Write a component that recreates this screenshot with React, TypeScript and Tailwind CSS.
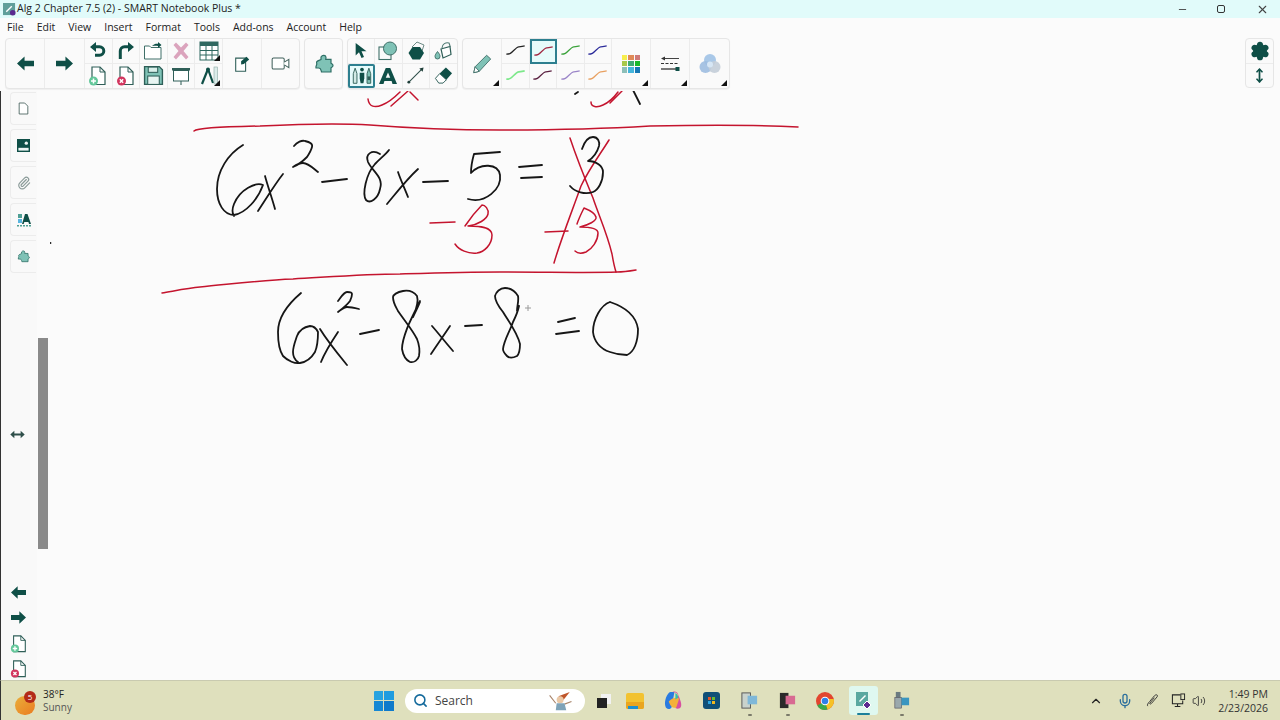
import React from "react";
import { Search, ChevronUp, Mic, X, Minus, Settings, MoveVertical, Paperclip, Volume2 } from "lucide-react";

const DARK = "#0f4f47";
const MID = "#7fc2b6";

type IconProps = { className?: string };

function ArrowLeft({ className }: IconProps) {
  return (
    <svg viewBox="0 0 20 18" className={className}>
      <path d="M1 9 9 1.5V6h10v6H9v4.5z" fill={DARK} />
    </svg>
  );
}

function ArrowRight({ className }: IconProps) {
  return (
    <svg viewBox="0 0 20 18" className={className}>
      <path d="M19 9 11 1.5V6H1v6h10v4.5z" fill={DARK} />
    </svg>
  );
}

function Undo() {
  return (
    <svg viewBox="0 0 20 20" className="w-[20px] h-[20px]">
      <path d="M2 6 8 1v3.2h3.5a5.7 5.7 0 0 1 0 11.6H7v-3h4.5a2.8 2.8 0 0 0 0-5.6H8V11z" fill={DARK} />
    </svg>
  );
}

function Redo() {
  return (
    <svg viewBox="0 0 20 20" className="w-[20px] h-[20px]">
      <path d="M18 6 12 1v3.2H8.500a5.700 5.700 0 0 0-5.700 5.800V18h3v-8a2.800 2.800 0 0 1 2.800-2.800H12V11z" fill={DARK} />
    </svg>
  );
}

function OpenFile() {
  return (
    <svg viewBox="0 0 20 20" className="w-[20px] h-[20px]">
      <path d="M1.500 18V5h5l1.500 1.500h10V18z" fill="#fff" stroke="#3f6f68" strokeWidth="1" />
      <path d="M9 5c2-2 4-2.500 6-2.200V1l3.500 3-3.500 3V5c-2-.3-4 0-6 0z" fill={DARK} />
    </svg>
  );
}

function Delete() {
  return (
    <svg viewBox="0 0 20 20" className="w-[20px] h-[20px]">
      <path d="M2.500 4 5 1.500l5 5 5-5L17.500 4l-5 6 5 6-2.500 2.500-5-5.500-5 5.500L2.500 16l5-6z" fill="#dba4bd" />
    </svg>
  );
}

function TableIcon() {
  return (
    <svg viewBox="0 0 20 20" className="w-[20px] h-[20px]">
      <rect x="1" y="1" width="18" height="18" fill="#fff" stroke="#2f6860" />
      <rect x="1" y="1" width="18" height="4" fill="#2f6860" />
      <path d="M1 9.500h18M1 14h18M7 5v14M13 5v14" stroke="#2f6860" strokeWidth="1" />
    </svg>
  );
}

function NewPage({ badge }: { badge: "add" | "del" }) {
  const color = badge === "add" ? "#63c79a" : "#d2365f";
  return (
    <svg viewBox="0 0 20 20" className="w-[20px] h-[20px]">
      <path d="M4 1h8l5 5v12.500H4z" fill="#fff" stroke="#2f5f58" strokeWidth="1.200" />
      <path d="M12 1v5h5" fill="none" stroke="#2f5f58" strokeWidth="1" />
      <circle cx="5.500" cy="15" r="4.500" fill={color} />
      {badge === "add" ? (
        <path d="M5.500 12.500v5M3 15h5" stroke="#fff" strokeWidth="1.500" />
      ) : (
        <path d="m3.800 13.300 3.400 3.400m0-3.400-3.400 3.400" stroke="#fff" strokeWidth="1.400" />
      )}
    </svg>
  );
}

function SaveIcon() {
  return (
    <svg viewBox="0 0 20 20" className="w-[21px] h-[21px]">
      <path d="M1.500 1.500h14l3 3v14h-17z" fill={MID} stroke="#2f5f58" strokeWidth="1.300" />
      <rect x="5" y="2" width="9" height="5" fill="#d9efea" stroke="#2f5f58" />
      <rect x="4.500" y="10.500" width="11" height="8" fill="#e8f5f2" stroke="#2f5f58" />
    </svg>
  );
}

function ScreenIcon() {
  return (
    <svg viewBox="0 0 20 20" className="w-[20px] h-[20px]">
      <rect x="1" y="2" width="18" height="2.500" fill="#2f5f58" />
      <rect x="2.500" y="4.500" width="15" height="10.500" fill="#fff" stroke="#2f5f58" />
      <path d="M10 15v2" stroke="#2f5f58" strokeWidth="1" />
      <circle cx="10" cy="18" r="1" fill="#6a8a85" />
    </svg>
  );
}

function Compass() {
  return (
    <svg viewBox="0 0 20 20" className="w-[20px] h-[20px]">
      <path d="M9 3 3 18M9 3l5 14" stroke={DARK} strokeWidth="2.200" fill="none" />
      <circle cx="9" cy="3.500" r="2" fill={DARK} />
      <rect x="15" y="1" width="3.500" height="17" fill="#dcecea" stroke="#8aa8a3" strokeWidth=".6" />
    </svg>
  );
}

function NoteIcon() {
  return (
    <svg viewBox="0 0 20 20" className="w-[18px] h-[18px]">
      <path d="M3 3.500h11V18H3z" fill="#fff" stroke="#2f5f58" strokeWidth="1.200" />
      <path d="m9 7 6-5 3 3-6 5-3 .5z" fill={DARK} />
    </svg>
  );
}

function CameraIcon() {
  return (
    <svg viewBox="0 0 20 14" className="w-[19px] h-[13px]">
      <rect x="1" y="1" width="13" height="12" rx="1.500" fill="#fff" stroke="#3f5f5a" strokeWidth="1.100" />
      <path d="m14 5.500 5-3v9l-5-3" fill="#fff" stroke="#3f5f5a" strokeWidth="1.100" />
    </svg>
  );
}

function Puzzle({ className }: IconProps) {
  return (
    <svg viewBox="0 0 20 20" className={className}>
      <path
        d="M7 3c1.500-2.500 5-2 5 .5 0 .8-.3 1.200-.3 1.800H17v3.800c.5.800 2 .7 2 2.400s-1.500 1.600-2 2.400V18H7.500c0-1.500-1-2.200-1-3s-1-1-2-1H2c-.5-2 .8-3 .8-4S2 8.500 3 7.500 6.500 6 7 5.500z"
        fill={MID}
        stroke="#2f6f66"
        strokeWidth="1.200"
      />
    </svg>
  );
}

function Cursor() {
  return (
    <svg viewBox="0 0 18 20" className="w-[15px] h-[17px]">
      <path d="M2 1v15l4-4 3 7 3-1.200-3-6.800h6z" fill={DARK} />
    </svg>
  );
}

function Shapes() {
  return (
    <svg viewBox="0 0 20 20" className="w-[20px] h-[20px]">
      <rect x="1" y="6" width="12" height="12.500" fill="none" stroke="#3f6f68" strokeWidth="1.100" />
      <circle cx="12" cy="7.500" r="6.500" fill={MID} stroke="#3f6f68" strokeWidth="1" />
    </svg>
  );
}

function Hexagon() {
  return (
    <svg viewBox="0 0 20 20" className="w-[20px] h-[20px]">
      <path d="m6 6 5-5 7 3-2 6" fill="none" stroke="#6d8b86" strokeWidth="1" />
      <path d="M6.500 6h7.500l4 6-4 6.500H6.500L2.500 12z" fill={DARK} />
    </svg>
  );
}

function Bucket() {
  return (
    <svg viewBox="0 0 20 20" className="w-[20px] h-[20px]">
      <path d="m8 8 9-2.500 1 8-8 3.500z" fill="#fff" stroke="#2f5f58" strokeWidth="1.200" />
      <path d="M9 7c0-4 4-6 7-5 1 2 1 3 1 4" fill="none" stroke="#4f7a73" strokeWidth="1.100" />
      <path d="M4.500 10.500c2 2.500 2.500 3.500 2.500 5a2.500 2.500 0 1 1-5 0c0-1.500 1-3 2.500-5z" fill={MID} stroke="#2f5f58" strokeWidth=".8" />
    </svg>
  );
}

function Pens() {
  return (
    <svg viewBox="0 0 24 20" className="w-[22px] h-[19px]">
      <path d="M2.500 8 4.500 2l2 6v10.500h-4z" fill="#d3ebe6" stroke="#2f5f58" />
      <circle cx="12" cy="3.500" r="2" fill={DARK} />
      <path d="M9.500 7h5v6l-1 5.500h-3l-1-5.500z" fill={DARK} />
      <path d="M17.500 8 19.500 2l2 6v10.500h-4z" fill={MID} stroke="#2f5f58" />
      <rect x="18" y="11" width="3" height="4" fill="#2f5f58" />
    </svg>
  );
}

function BigA() {
  return (
    <svg viewBox="0 0 20 20" className="w-[18px] h-[18px]">
      <path d="M7.500 1h5L20 19h-5l-1-3.500H6L5 19H0zm2.500 5L7.500 12h5z" fill={DARK} fillRule="evenodd" />
    </svg>
  );
}

function LineTool() {
  return (
    <svg viewBox="0 0 20 20" className="w-[19px] h-[19px]">
      <path d="M3 17 17 3" stroke="#2f4f4a" strokeWidth="1.100" />
      <circle cx="3" cy="17" r="1.500" fill="#1f3f3a" />
      <path d="m18.500 1.500-1 4.500-3.500-3.500z" fill="#1f3f3a" />
    </svg>
  );
}

function Eraser() {
  return (
    <svg viewBox="0 0 20 20" className="w-[19px] h-[19px]">
      <path d="M1.500 13 6 8l7 6.500L9.500 18H5z" fill="#fff" stroke="#2f5f58" />
      <path d="M6 8l6.500-6.500 6.500 6L13 14.500z" fill={DARK} />
    </svg>
  );
}

function Pencil() {
  return (
    <svg viewBox="0 0 24 24" className="w-[22px] h-[22px]">
      <path d="m17 2.500 4.500 4L9 20l-6 1.500L4.500 15z" fill={MID} stroke="#3f6f68" strokeWidth="1" />
      <path d="m4.500 15 4.500 5L3 21.500z" fill="#fff" stroke="#3f6f68" strokeWidth="1" />
    </svg>
  );
}

function Stroke({ color, width = 1.300 }: { color: string; width?: number }) {
  return (
    <svg viewBox="0 0 22 12" className="w-[21px] h-[11px]">
      <path d="M1 10c4 0 5-1 8-4s5-4 5.500-4c2 0 4-.5 6.500-1" fill="none" stroke={color} strokeWidth={width} />
    </svg>
  );
}

function Palette() {
  const colors = [
    "#f7ee4c", "#e08a57", "#cf7a78",
    "#a8c84a", "#3eaa72", "#18b82a",
    "#8dbfb8", "#45b5dc", "#1678b4",
  ];
  return (
    <div className="grid grid-cols-3 gap-px w-[18px] h-[18px]">
      {colors.map((c, i) => (
        <div key={i} style={{ backgroundColor: c }} />
      ))}
    </div>
  );
}

function LineStyle() {
  return (
    <svg viewBox="0 0 20 16" className="w-[20px] h-[16px]">
      <path d="M4 2.500h15" stroke="#444" strokeWidth="1" />
      <path d="M5 .5 1 2.500l4 2z" fill="#333" />
      <path d="M1 7.500h18" stroke="#333" strokeWidth="1" strokeDasharray="3 1.500" />
      <path d="M1 13h15" stroke="#333" strokeWidth="1.300" />
      <rect x="15.500" y="11" width="4" height="4" fill={DARK} />
    </svg>
  );
}

function FillBlobs() {
  return (
    <svg viewBox="0 0 22 22" className="w-[22px] h-[22px]">
      <circle cx="11" cy="7" r="6" fill="#a9c8e8" />
      <circle cx="6.500" cy="14" r="6" fill="#9dbde0" opacity=".9" />
      <circle cx="15.500" cy="14" r="6" fill="#c3cdd8" opacity=".9" />
      <circle cx="11" cy="11.500" r="3" fill="#d6e6f5" />
    </svg>
  );
}

function Cell({ className = "", children }: { className?: string; children?: React.ReactNode }) {
  return (
    <div className={"flex items-center justify-center border-[#ececec] " + className}>{children}</div>
  );
}

function Corner() {
  return (
    <span className="absolute right-[2px] bottom-[2px] w-0 h-0 border-l-[6px] border-t-[6px] border-l-transparent border-t-transparent border-r-[0px] border-b-0 [border-bottom:6px_solid_#111] [border-top:0] " />
  );
}

function Toolbar() {
  const frame = "flex h-[51px] rounded-[4px] border border-[#e6e6e6] bg-[#fafafa] shadow-[0_1px_1px_rgba(0,0,0,0.05)]";
  const tall = "w-[39px] border-r";
  const small = "border-r border-b";
  return (
    <div className="flex h-[53px] bg-[#fbfbfb] pl-[5px] items-start gap-[4px] relative z-10">
      <div className={frame + " w-[295px]"}>
        <Cell className={tall}><ArrowLeft className="w-[19px] h-[17px]" /></Cell>
        <Cell className={tall + " w-[40px]"}><ArrowRight className="w-[19px] h-[17px]" /></Cell>
        <div className="grid grid-cols-5 grid-rows-2 w-[138px]">
          <Cell className={small}><Undo /></Cell>
          <Cell className={small}><Redo /></Cell>
          <Cell className={small}><OpenFile /></Cell>
          <Cell className={small}><Delete /></Cell>
          <Cell className="relative border-b border-r"><TableIcon /><Corner /></Cell>
          <Cell className="border-r"><NewPage badge="add" /></Cell>
          <Cell className="border-r"><NewPage badge="del" /></Cell>
          <Cell className="border-r"><SaveIcon /></Cell>
          <Cell className="border-r"><ScreenIcon /></Cell>
          <Cell className="relative border-r"><Compass /><Corner /></Cell>
        </div>
        <Cell className={tall}><NoteIcon /></Cell>
        <Cell className="flex-1"><CameraIcon /></Cell>
      </div>
      <div className={frame + " w-[39px]"}>
        <Cell className="flex-1"><Puzzle className="w-[20px] h-[20px]" /></Cell>
      </div>
      <div className={frame + " w-[111px] grid grid-cols-4 grid-rows-2"}>
        <Cell className={small}><Cursor /></Cell>
        <Cell className={small}><Shapes /></Cell>
        <Cell className={small}><Hexagon /></Cell>
        <Cell className="border-b"><Bucket /></Cell>
        <Cell className="border-2 !border-[#2d7f8f] bg-[#e6fbfb] rounded-[2px]"><Pens /></Cell>
        <Cell className="border-r"><BigA /></Cell>
        <Cell className="border-r"><LineTool /></Cell>
        <Cell><Eraser /></Cell>
      </div>
      <div className={frame + " w-[268px]"}>
        <Cell className={"relative " + tall}><Pencil /><Corner /></Cell>
        <div className="grid grid-cols-4 grid-rows-2 w-[110px]">
          <Cell className={small}><Stroke color="#222" /></Cell>
          <Cell className="border-2 !border-[#2d7f8f] bg-[#e6fbfb]"><Stroke color="#a02640" /></Cell>
          <Cell className={small}><Stroke color="#3aa23a" /></Cell>
          <Cell className={small}><Stroke color="#2a2a9a" /></Cell>
          <Cell className="border-r"><Stroke color="#7ce88a" width={1.800} /></Cell>
          <Cell className="border-r"><Stroke color="#5a2040" /></Cell>
          <Cell className="border-r"><Stroke color="#9a84c8" /></Cell>
          <Cell className="border-r"><Stroke color="#e8a060" /></Cell>
        </div>
        <Cell className={"relative " + tall}><Palette /><Corner /></Cell>
        <Cell className={"relative " + tall}><LineStyle /><Corner /></Cell>
        <Cell className="relative flex-1"><FillBlobs /><Corner /></Cell>
      </div>
      <div className="ml-auto mr-[6px] w-[29px] h-[50px] rounded-[4px] border border-[#e6e6e6] bg-[#fafafa] flex flex-col">
        <Cell className="h-[25px] border-b"><Settings size={20} color={DARK} fill={DARK} strokeWidth={2.500} /></Cell>
        <Cell className="flex-1"><MoveVertical size={15} color={DARK} strokeWidth={2.800} /></Cell>
      </div>
    </div>
  );
}

function SideTab({ children }: { children: React.ReactNode }) {
  return (
    <div className="w-[26px] h-[33px] rounded-l-[4px] border border-r-0 border-[#ececec] bg-[#f9f9f9] flex items-center justify-center">
      {children}
    </div>
  );
}

function SideBar() {
  return (
    <div className="w-[50px] shrink-0 flex border-l border-[#333] bg-[#fdfdfd]">
      <div className="w-[36px] shrink-0 flex flex-col items-end bg-[#f9f9f9] pr-[1px] pt-[3px]">
        <div className="flex flex-col gap-[4px]">
          <SideTab>
            <svg viewBox="0 0 14 16" className="w-[11px] h-[13px]">
              <path d="M1.500 1h7l4 4v10h-11z" fill="#fff" stroke="#48625e" strokeWidth="1.100" />
            </svg>
          </SideTab>
          <SideTab>
            <svg viewBox="0 0 14 14" className="w-[13px] h-[13px]">
              <rect width="14" height="14" fill={DARK} />
              <rect x="1.500" y="9.500" width="11" height="3" fill="#eef5f3" />
              <circle cx="10" cy="4.500" r="1.800" fill="#eef5f3" />
            </svg>
          </SideTab>
          <SideTab><Paperclip size={14} color="#8a9a98" /></SideTab>
          <SideTab>
            <svg viewBox="0 0 14 14" className="w-[14px] h-[14px]">
              <rect x="1" y="1" width="4" height="4" fill="#4f9f94" />
              <rect x="1" y="6" width="4" height="4" fill="#58b5e0" />
              <path d="M8 1h2.500L14 11h-2l-.6-2H7.300l-.6 2H5z" fill={DARK} />
              <path d="M0 12.800h14" stroke="#4f9f94" strokeWidth="1.400" strokeDasharray="2 1" />
            </svg>
          </SideTab>
          <SideTab><Puzzle className="w-[13px] h-[13px]" /></SideTab>
        </div>
        <div className="flex-1 w-full relative">
          <div className="absolute left-[9px] top-[157px] text-[#3f5f5a]">
            <svg viewBox="0 0 16 10" className="w-[15px] h-[9px]">
              <path d="M0 5 4.500.8V4h7V.8L16 5l-4.500 4.200V6h-7v3.200z" fill="#2f4f4a" />
            </svg>
          </div>
          <div className="absolute left-[8px] bottom-[3px] flex flex-col items-center gap-[10px]">
            <ArrowLeft className="w-[19px] h-[15px]" />
            <ArrowRight className="w-[19px] h-[15px]" />
            <div className="flex flex-col gap-[7px] -mt-[1px]">
              <div className="w-[18px] h-[18px] flex"><NewPage badge="add" /></div>
              <div className="w-[18px] h-[18px] flex"><NewPage badge="del" /></div>
            </div>
          </div>
        </div>
      </div>
      <div className="flex-1 bg-[#fbfbfb] relative">
        <div className="absolute left-[1px] top-[249px] w-[10px] h-[211px] bg-[#8a8a8a]" />
      </div>
    </div>
  );
}

function Ink() {
  const black = { fill: "none", stroke: "#161616", strokeWidth: 1.800, strokeLinecap: "round", strokeLinejoin: "round" } as const;
  const red = { fill: "none", stroke: "#c4142e", strokeWidth: 1.500, strokeLinecap: "round", strokeLinejoin: "round" } as const;
  return (
    <svg viewBox="50 91 1230 589" className="absolute inset-0 w-full h-full">
      {/* cut off strokes from the step above */}
      <g {...red}>
        <path d="M368 100c1 8 7 9 14 6 8-3 14-9 18-13M391 107l17-15M410 93l8 8" />
        <path d="M591 103c0 5 6 6 12 3 7-3 12-9 15-13M610 104l12-12" />
      </g>
      <g {...black}>
        <path d="M575 95l3-2M633 91l7 14" />
      </g>
      <g {...red}>
        <path d="M194 132c3-3 21-4 66-5 40-2 80-3 110-1 50 4 100 5 130 5 60 0 100-1 150-4 50-1 110-1 148 1" />
        <path d="M162 294c12-2 26-5 38-6 32-3 62-7 93-8 36-2 72-5 107-5 34-1 66-2 100-2 50 0 90 1 117 0 7 0 13-1 19-2" />
        <path d="M430 224l25-1M545 233l23-1" />
        <path d="M465 227c4-6 12-16 17-21 3 0 7 4 6 9-1 5-10 11-20 12 12 0 24 1 24 9 0 10-8 17-15 18-9 1-18-3-22-9" />
        <path d="M570 139c6 18 13 36 23 60 6 18 14 35 19 56 1 6 2 12 4 18" />
        <path d="M609 141c-8 13-20 29-28 46-10 28-20 53-27 77" />
        <path d="M577 225c2-6 5-12 7-16 5 2 11 5 12 9 1 4-8 8-16 10 9 0 18 1 18 6 0 8-6 16-12 19-5 2-9 1-11-1" />
      </g>
      <g {...black}>
        <path d="M243 146c-15 9-26 26-26 44 0 15 7 26 17 26 12-2 24-16 29-30-7-3-23 4-29 19-2 5-2 9 0 12" />
        <path d="M258 212c8-12 17-27 25-37M265 177c3 11 7 22 10 33" />
        <path d="M294 147c3-4 8-6 11-5 5 1 8 3 7 6-1 4-3 7-5 10-4 4-9 8-14 10 3-2 7-4 10-4 5 0 10 5 15 9" />
        <path d="M322 183l25-3" />
        <path d="M380 155c-8-5-15 0-12 8 4 9 16 15 12 27-2 10-10 15-14 11-4-6 0-26 9-36 7-7 11-10 14-14" />
        <path d="M387 205c10-12 20-25 31-35M398 173c3 9 7 17 10 25" />
        <path d="M423 183l25-1" />
        <path d="M500 153l-26 2c-2 7-3 13-3 19 9-10 27-10 29 2 2 14-15 29-32 24" />
        <path d="M519 168l23-2M521 179l21-1" />
        <path d="M582 150c2-6 6-12 11-12 5 0 7 5 6 9-2 7-6 12-11 15 8 0 15 5 15 11 0 10-5 18-10 20-8 3-18 0-23-6" />
        <path d="M301 294c-13 11-23 24-23 39 0 10 1 18 5 24 5 5 12 8 17 7 7-1 12-6 15-11 3-7 3-16 3-20-2-4-5-6-8-6-6 1-11 5-13 10-2 6-4 11-4 16 0 4 2 8 5 10" />
        <path d="M320 330c8 13 18 25 27 36M338 333c-6 9-13 20-17 30" />
        <path d="M338 302c3-4 6-9 9-9 3 0 5 1 5 2 0 3-1 5-2 7-3 4-8 8-12 11 3-2 6-5 9-5 4 0 8 1 12 2" />
        <path d="M360 335l19-4" />
        <path d="M420 303c-2 5-5 11-7 15 3-7 6-15 4-21-3-4-8-6-14-5-6 1-10 4-10 6 0 6 3 10 5 14 6 9 14 18 19 28 2 5 3 11 2 17-1 4-5 7-9 6-4-2-7-7-8-13 0-8 3-15 6-23 4-9 8-17 12-25" />
        <path d="M431 355c6-9 13-19 19-28M432 327c7 8 14 17 21 25" />
        <path d="M465 327l17-1" />
        <path d="M517 312c0-5 2-10 1-15-3-5-8-8-13-8-5 0-9 4-10 8 0 6 4 11 8 16 6 10 14 20 17 32 0 5-1 10-3 12-4 2-8 2-10 0-3-3-4-5-4-7 1-9 7-18 10-27 3-6 5-11 6-16" />
        <path d="M558 323l17-4M556 335l23-3" />
        <path d="M610 303c-9 3-17 17-17 30 1 9 7 17 17 20 8 3 14 3 17 3 7-3 11-13 11-26-2-14-13-22-28-27" />
      </g>
      <path d="M528 306v6M525 309h6" stroke="#9a9a9a" strokeWidth="1" />
      <circle cx="50.500" cy="244" r="0.900" fill="#111" />
    </svg>
  );
}

function Tile({ children, active }: { children: React.ReactNode; active?: boolean }) {
  return (
    <div className={"relative w-[29px] h-[29px] flex items-center justify-center rounded-[3px] " + (active ? "bg-[#dff8f0]" : "")}>
      {children}
      {active && <span className="absolute bottom-0 left-[8px] w-[13px] h-[2px] rounded bg-[#1b7f9a]" />}
    </div>
  );
}

function AppDot() {
  return <span className="absolute -bottom-[1px] left-[13px] w-[4px] h-[2px] rounded bg-[#7a7a6a]" />;
}

function TaskBar() {
  return (
    <div className="h-[40px] shrink-0 flex items-center bg-[#dfe0bd] border-t border-[#c9cab0] border-l border-l-[#333] relative z-10 [font-family:'Open_Sans','Noto_Sans',sans-serif] text-[#333]">
      <div className="relative w-[22px] h-[22px] ml-[14px]">
        <div className="absolute left-0 top-[6px] w-[20px] h-[19px] rounded-full bg-gradient-to-br from-[#e9ae3a] to-[#ea7a20]" />
        <div className="absolute left-[9px] top-[1px] w-[12px] h-[12px] rounded-full bg-[#b32a18] text-white text-[8px] leading-[12px] text-center">5</div>
      </div>
      <div className="ml-[6px] flex flex-col leading-[13px] text-[10px] mt-[1px]">
        <span className="text-[#222]">38°F</span>
        <span className="text-[#555]">Sunny</span>
      </div>
      <div className="ml-[302px] grid grid-cols-2 gap-px w-[20px] h-[20px]">
        <div className="bg-[#27a3e0] rounded-tl-[1px]" />
        <div className="bg-[#1f9ce0]" />
        <div className="bg-[#1688d4]" />
        <div className="bg-[#0f7acb]" />
      </div>
      <div className="ml-[11px] w-[180px] h-[24px] rounded-full bg-white flex items-center pl-[8px] relative">
        <Search size={15} color="#146a9c" strokeWidth={2.500} />
        <span className="ml-[7px] text-[12px] text-[#444]">Search</span>
        <svg viewBox="0 0 32 24" className="absolute right-[8px] top-[2px] w-[32px] h-[21px]">
          <path d="M13 6 26 1l-7 9z" fill="#c0562a" />
          <circle cx="15" cy="10" r="4" fill="#eac8a6" />
          <path d="M3 5l7 9M28 12l-8 3" stroke="#a8846a" strokeWidth="1.300" />
          <path d="M11 14h9l2 8H10z" fill="#7fa3b8" />
        </svg>
      </div>
      <div className="ml-[12px] relative w-[14px] h-[14px]">
        <div className="absolute left-[4px] top-0 w-[10px] h-[10px] bg-[#f2f2f2]" />
        <div className="absolute left-0 bottom-0 w-[10px] h-[10px] bg-[#222]" />
      </div>
      <div className="ml-[10px] flex items-center gap-[9px]">
        <div className="w-[29px] flex justify-center">
          <div className="relative w-[18px] h-[16px] bg-[#f2c230] rounded-[2px]">
            <div className="absolute left-0 bottom-0 w-full h-[7px] bg-[#e9a51f] rounded-b-[2px]" />
            <div className="absolute left-[2px] bottom-0 w-[10px] h-[3px] bg-[#1c8fd0]" />
          </div>
        </div>
        <Tile>
          <svg viewBox="0 0 20 20" className="w-[19px] h-[19px]">
            <path d="M7 1h4l-3 16c-.5 2-4 2.500-5.500 1S0 11 3 5c1-2 2.500-4 4-4z" fill="#2a7be0" />
            <path d="M9 1c3-1 5 0 6 3s4 9 3 12-4 3-6 2l3-13c-1-3-3-4-6-4z" fill="#d84fa0" />
            <path d="M5 11c3-4 8-5 11-3l-3 9c-3 2-6 0-8-6z" fill="#f4b03a" />
            <path d="M12 2c2 1 3 3 3 5l-3 2z" fill="#38c0a8" />
          </svg>
        </Tile>
        <Tile>
          <div className="relative w-[17px] h-[17px] rounded-[3px] bg-[#0f4f78] flex items-center justify-center">
            <div className="grid grid-cols-2 gap-px w-[7px] h-[7px]">
              <div className="bg-[#e8532a]" /><div className="bg-[#6cb82c]" />
              <div className="bg-[#2aa4e0]" /><div className="bg-[#f2b81e]" />
            </div>
          </div>
        </Tile>
        <Tile>
          <svg viewBox="0 0 20 20" className="w-[19px] h-[19px]">
            <rect x="2" y="2" width="9" height="16" fill="#c9d2cc" stroke="#555" />
            <rect x="8" y="5" width="10" height="9" fill="#7fb8d8" />
          </svg>
          <AppDot />
        </Tile>
        <Tile>
          <svg viewBox="0 0 20 20" className="w-[19px] h-[19px]">
            <rect x="2" y="2" width="9" height="16" fill="#2a2a2a" />
            <rect x="8" y="5" width="10" height="9" fill="#d86a92" />
          </svg>
          <AppDot />
        </Tile>
        <Tile>
          <svg viewBox="0 0 20 20" className="w-[20px] h-[20px]">
            <circle cx="10" cy="10" r="9" fill="#e2452f" />
            <path d="M10 10 2.200 14.500A9 9 0 0 0 10 19c1 0 2-.2 2.500-.4z" fill="#3aa84a" />
            <path d="M10 10l2.500 8.600A9 9 0 0 0 18.700 8H10z" fill="#f6c226" />
            <circle cx="10" cy="10" r="4.300" fill="#fff" />
            <circle cx="10" cy="10" r="3.300" fill="#2f7fe8" />
          </svg>
        </Tile>
        <Tile active>
          <svg viewBox="0 0 20 20" className="w-[20px] h-[20px]">
            <path d="M3 1h12v14H3z" fill="#5aa8a0" />
            <path d="M6 10l6-6 1 1-6 6z" fill="#fff" />
            <path d="M14 10l4 4-4 4-4-4z" fill="#5a2a90" stroke="#fff" strokeWidth="1" />
          </svg>
        </Tile>
        <Tile>
          <svg viewBox="0 0 20 20" className="w-[19px] h-[19px]">
            <rect x="4" y="1" width="5" height="6" fill="#6a7a80" />
            <rect x="3" y="7" width="7" height="11" fill="#9aa8ac" stroke="#445" strokeWidth=".6" />
            <rect x="10" y="7" width="8" height="8" fill="#3a96c0" />
          </svg>
          <AppDot />
        </Tile>
      </div>
      <div className="ml-auto flex items-center pr-[12px]">
        <ChevronUp size={14} color="#222" strokeWidth={2} />
        <Mic size={16} color="#2c6f9c" className="ml-[14px]" />
        <svg viewBox="0 0 16 16" className="w-[15px] h-[15px] ml-[12px]">
          <path d="M3 14c-1-1 0-3 2-5l5-6c2-2 4-1 3 1L7 11c-1 1-2 1-2 0l5-6" fill="none" stroke="#333" strokeWidth="1" />
        </svg>
        <svg viewBox="0 0 16 16" className="w-[15px] h-[15px] ml-[11px]">
          <path d="M10 2H1.500v9.500h11V8M7 11.500V14M4 14.500h6" fill="none" stroke="#222" strokeWidth="1.100" />
          <rect x="10.500" y="1" width="4" height="6" fill="none" stroke="#222" strokeWidth="1" />
        </svg>
        <Volume2 size={14} color="#333" strokeWidth={1.500} className="ml-[6px]" />
        <div className="ml-[12px] flex flex-col items-end leading-[14px] text-[10.500px] text-[#333]">
          <span>1:49 PM</span>
          <span>2/23/2026</span>
        </div>
      </div>
    </div>
  );
}

export default function App() {
  return (
    <div className="w-[1280px] h-[720px] overflow-hidden flex flex-col bg-[#fbfbfb] [font-family:'Open_Sans','Noto_Sans',sans-serif]">
      <div className="h-[18px] shrink-0 flex items-center bg-[#e1fbfa] pl-[3px] text-[#222]">
        <svg viewBox="0 0 14 14" className="w-[13px] h-[13px]">
          <rect width="13" height="13" fill="#5f9f9a" />
          <path d="M3 9l6-6 1 1-6 6z" fill="#fff" />
          <circle cx="10.500" cy="10.500" r="3" fill="#5a2a90" />
        </svg>
        <span className="ml-[1px] text-[10.500px] whitespace-nowrap">Alg 2 Chapter 7.5 (2) - SMART Notebook Plus *</span>
        <div className="ml-auto flex items-center text-[#444]">
          <Minus size={11} className="mr-[29px]" />
          <div className="relative w-[8px] h-[8px] rounded-[2px] border border-[#333] mr-[31px]" />
          <X size={13} className="mr-[11px]" />
        </div>
      </div>
      <div className="h-[20px] shrink-0 flex items-center gap-[13px] pl-[7px] text-[10.500px] text-[#222] bg-[#fbfbfb]">
        <span>File</span>
        <span>Edit</span>
        <span>View</span>
        <span>Insert</span>
        <span>Format</span>
        <span>Tools</span>
        <span>Add-ons</span>
        <span>Account</span>
        <span>Help</span>
      </div>
      <Toolbar />
      <div className="flex-1 flex min-h-0 -mt-[2px]">
        <SideBar />
        <div className="flex-1 relative bg-[#fbfbfb]">
          <Ink />
        </div>
      </div>
      <TaskBar />
    </div>
  );
}
